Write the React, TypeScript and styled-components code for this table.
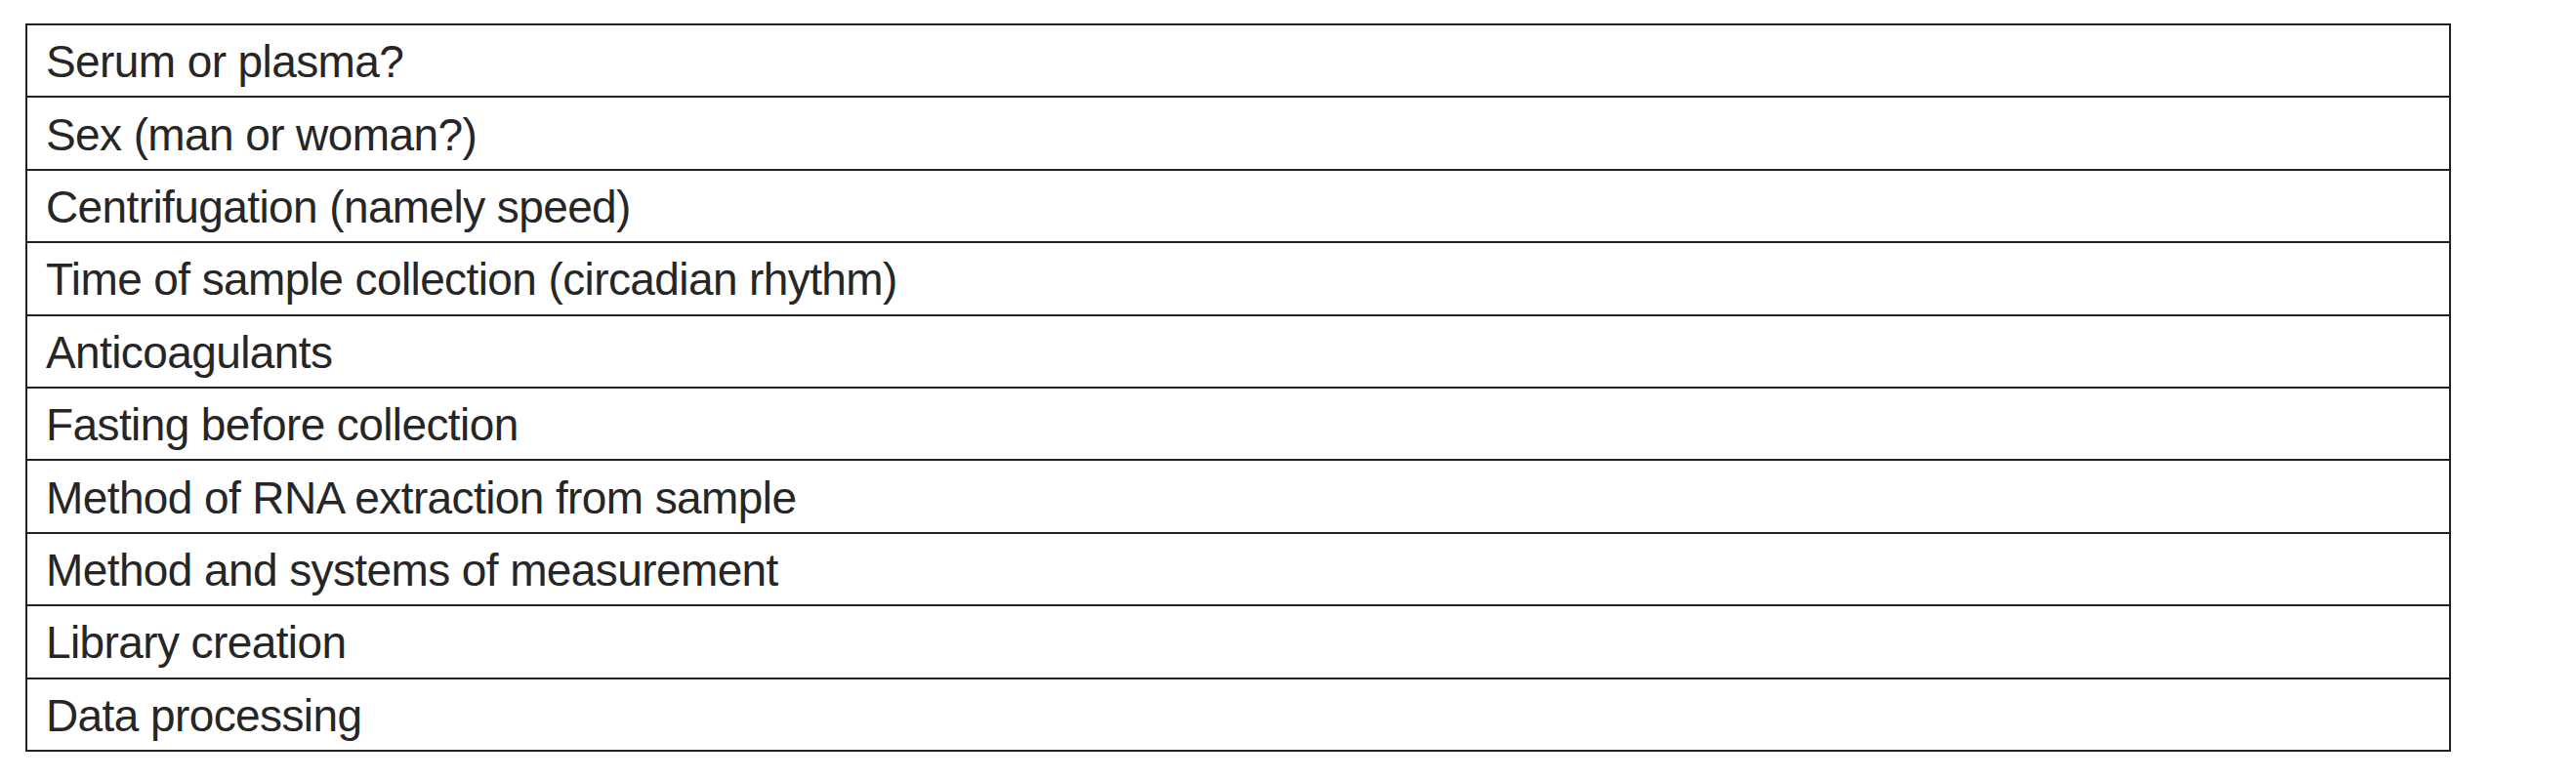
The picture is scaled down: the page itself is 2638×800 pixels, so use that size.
import { FC } from 'react';
import styled, { createGlobalStyle } from 'styled-components';

const factors = [
  'Serum or plasma?',
  'Sex (man or woman?)',
  'Centrifugation (namely speed)',
  'Time of sample collection (circadian rhythm)',
  'Anticoagulants',
  'Fasting before collection',
  'Method of RNA extraction from sample',
  'Method and systems of measurement',
  'Library creation',
  'Data processing',
];

const App: FC = () => (
  <>
    <GlobalStyle />
    <Page>
      <Table>
        {factors.map((text) => (
          <Row key={text}>
            <Cell>{text}</Cell>
          </Row>
        ))}
      </Table>
    </Page>
  </>
);

export default App;

const GlobalStyle = createGlobalStyle`
  html, body {
    margin: 0;
    background: #fff;
  }
`;

const Page = styled.div`
  padding: 24px 0 0 26px;
`;

const Table = styled.div`
  display: flex;
  flex-direction: column;
  width: 2484px;
  box-sizing: border-box;
  border: 2px solid #222;
`;

const Row = styled.div`
  display: flex;
  align-items: center;
  height: 72.4px;

  & + & {
    border-top: 2px solid #222;
  }
`;

const Cell = styled.div`
  padding: 2px 0 0 19px;
  font-family: 'Liberation Sans', Arial, sans-serif;
  font-size: 46px;
  letter-spacing: -0.6px;
  line-height: 1;
  color: #262626;
  white-space: nowrap;
`;
